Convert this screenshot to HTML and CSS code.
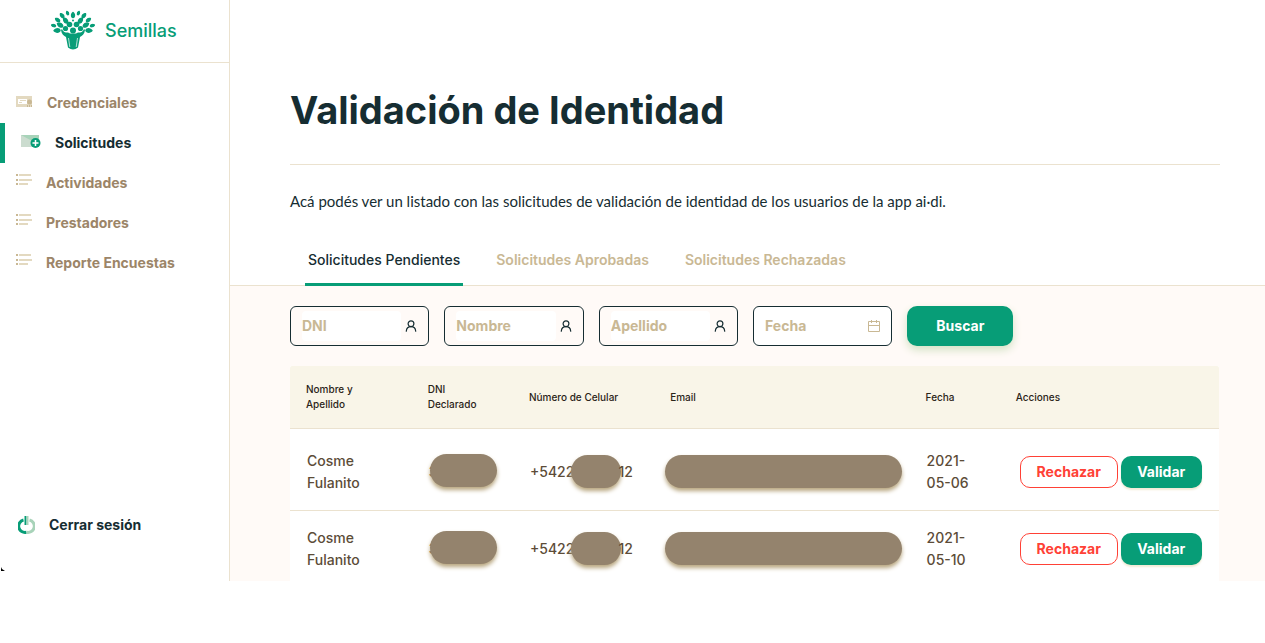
FILE: index.html
```html
<!DOCTYPE html>
<html lang="es">
<head>
<meta charset="utf-8">
<meta name="viewport" content="width=device-width, initial-scale=1">
<title>Semillas - Validación de Identidad</title>
<link rel="stylesheet" href="styles.css">
</head>
<body>
<svg class="sprite" aria-hidden="true">
  <symbol id="leaf" viewBox="-2 -3 4 6"><path d="M0-3C2.600-1 2.400 2 0 3C-2.400 2-2.600-1 0-3z"/></symbol>
  <symbol id="list" viewBox="0 0 16 12">
    <path fill="#c9b894" d="M0 0h2v2H0zM0 5h2v2H0zM0 9h2v2H0z"/>
    <path fill="#e3d9c0" d="M3 0h12v2H3zM3 5h13v2H3zM3 9h9v2H3z"/>
  </symbol>
  <symbol id="user" viewBox="0 0 12 12">
    <g fill="none" stroke="#162d32" stroke-width="1.200" stroke-linecap="round"><circle cx="6" cy="3.800" r="2.900"/><path d="M1.300 11.200c.200-3 2-4.500 4.700-4.500s4.500 1.500 4.700 4.500"/></g>
  </symbol>
</svg>
<div class="app">
  <aside class="sidebar">
    <a class="brand" href="#">
      <svg class="brand-logo" viewBox="0 0 44 40" aria-hidden="true" fill="#079d77">
        <use href="#leaf" x="-2" y="-3" width="4" height="6" transform="translate(22 5) scale(1.200)"/>
        <use href="#leaf" x="-2" y="-3" width="4" height="6" transform="translate(16.500 3) rotate(-20) scale(.9)"/>
        <use href="#leaf" x="-2" y="-3" width="4" height="6" transform="translate(27.500 3) rotate(20) scale(.9)"/>
        <use href="#leaf" x="-2" y="-3" width="4" height="6" transform="translate(11 5.500) rotate(-40) scale(1.100)"/>
        <use href="#leaf" x="-2" y="-3" width="4" height="6" transform="translate(33 5.500) rotate(40) scale(1.100)"/>
        <use href="#leaf" x="-2" y="-3" width="4" height="6" transform="translate(14.500 10.500) rotate(-35) scale(1.300)"/>
        <use href="#leaf" x="-2" y="-3" width="4" height="6" transform="translate(29.500 10.500) rotate(35) scale(1.300)"/>
        <use href="#leaf" x="-2" y="-3" width="4" height="6" transform="translate(6.500 10) rotate(-55) scale(1.100)"/>
        <use href="#leaf" x="-2" y="-3" width="4" height="6" transform="translate(37.500 10) rotate(55) scale(1.100)"/>
        <use href="#leaf" x="-2" y="-3" width="4" height="6" transform="translate(9 15) rotate(-60) scale(1.300)"/>
        <use href="#leaf" x="-2" y="-3" width="4" height="6" transform="translate(35 15) rotate(60) scale(1.300)"/>
        <use href="#leaf" x="-2" y="-3" width="4" height="6" transform="translate(2.500 15.500) rotate(-75)"/>
        <use href="#leaf" x="-2" y="-3" width="4" height="6" transform="translate(41.500 15.500) rotate(75)"/>
        <use href="#leaf" x="-2" y="-3" width="4" height="6" transform="translate(6 20.500) rotate(-95) scale(1.300)"/>
        <use href="#leaf" x="-2" y="-3" width="4" height="6" transform="translate(38 20.500) rotate(95) scale(1.300)"/>
        <circle cx="22" cy="10.500" r="1"/>
        <circle cx="18.500" cy="14.500" r="2.800"/><circle cx="25.500" cy="14.500" r="2.800"/><circle cx="14.500" cy="18.500" r="2.600"/><circle cx="29.500" cy="18.500" r="2.600"/><circle cx="22" cy="20.500" r="3"/>
        <path d="M11 19c1 3 3 3.500 6 3.500l2 1h6l2-1c3 0 5-.5 6-3.500l1 1c-.5 4-3 6-5 7L27 37.500q-5 4-10 0L15 27C13 26 10.500 24 10 20z"/>
        <path d="M17.500 28l1.300 9M26.500 28l-1.300 9" stroke="#fff" stroke-width=".7"/>
      </svg>
      <span>Semillas</span>
    </a>
    <nav class="menu">
      <a class="menu-item" href="#">
        <svg width="17" height="12" viewBox="0 0 17 12" aria-hidden="true"><path fill="#e3d9c0" d="M0 0h16v11H0z"/><path fill="#fff" d="M2 3h9v5H2z"/><path stroke="#e3d9c0" d="M4 4.500h6M3 6.500h3"/><circle cx="13.500" cy="6" r="2.500" fill="#c9b894"/><path fill="#c9b894" d="M11 9h1v2h-1zM13 9h1v2h-1zM15 9h1v2h-1z"/></svg>
        Credenciales</a>
      <a class="menu-item is-active" href="#" aria-current="page">
        <svg width="20" height="14" viewBox="0 0 20 14" aria-hidden="true"><path fill="#cbdccf" d="M0 0h18v12H0z"/><path fill="#a8d3b9" d="M0 0h18v4l-5 3z"/><circle cx="14.500" cy="8" r="5" fill="#079d77"/><path stroke="#fff" stroke-width="1.500" d="M14.500 5v6M11.500 8h6"/></svg>
        Solicitudes</a>
      <a class="menu-item" href="#"><svg class="icon-list" width="16" height="12" aria-hidden="true"><use href="#list"/></svg>Actividades</a>
      <a class="menu-item" href="#"><svg class="icon-list" width="16" height="12" aria-hidden="true"><use href="#list"/></svg>Prestadores</a>
      <a class="menu-item" href="#"><svg class="icon-list" width="16" height="12" aria-hidden="true"><use href="#list"/></svg>Reporte Encuestas</a>
    </nav>
    <button class="logout" type="button">
      <svg width="17" height="18" viewBox="0 0 17 18" aria-hidden="true" fill="none" stroke-width="3"><path stroke="#079d77" d="M5.500 4A6.300 6.300 0 0 0 8.500 16.300"/><path stroke="#a8d3b9" d="M11.500 4A6.300 6.300 0 0 1 8.500 16.300"/><path stroke="#079d77" stroke-width="2" d="M7.500 0v9"/><path stroke="#a8d3b9" stroke-width="2" d="M9.500 0v9"/></svg>
      Cerrar sesión</button>
    <svg class="corner" width="4" height="4" viewBox="0 0 4 4" aria-hidden="true"><path d="M0 0l1 2 3 2H0z"/></svg>
  </aside>
  <main class="main">
    <header class="head">
      <h1>Validación de Identidad</h1>
      <p>Acá podés ver un listado con las solicitudes de validación de identidad de los usuarios de la app ai·di.</p>
    </header>
    <div class="tabs" role="tablist">
      <button class="tab is-active" type="button" role="tab" aria-selected="true">Solicitudes Pendientes</button>
      <button class="tab" type="button" role="tab" aria-selected="false">Solicitudes Aprobadas</button>
      <button class="tab" type="button" role="tab" aria-selected="false">Solicitudes Rechazadas</button>
    </div>
    <section class="panel">
      <form class="filters">
        <label class="field"><input type="text" placeholder="DNI" aria-label="DNI"><svg width="12" height="12" aria-hidden="true"><use href="#user"/></svg></label>
        <label class="field"><input type="text" placeholder="Nombre" aria-label="Nombre"><svg width="12" height="12" aria-hidden="true"><use href="#user"/></svg></label>
        <label class="field"><input type="text" placeholder="Apellido" aria-label="Apellido"><svg width="12" height="12" aria-hidden="true"><use href="#user"/></svg></label>
        <label class="field field-date"><input type="text" placeholder="Fecha" aria-label="Fecha"><svg width="12" height="12" viewBox="0 0 12 12" aria-hidden="true" fill="none" stroke="#c9b894"><path d="M.5 1.500h11v10H.5zM.5 5.500h11M3.500 0v3M8.500 0v3"/></svg></label>
        <button class="search" type="button">Buscar</button>
      </form>
      <table class="requests">
        <colgroup><col class="c-name"><col class="c-dni"><col class="c-phone"><col class="c-mail"><col class="c-date"><col></colgroup>
        <thead>
          <tr><th>Nombre y<br>Apellido</th><th>DNI<br>Declarado</th><th>Número de Celular</th><th>Email</th><th>Fecha</th><th>Acciones</th></tr>
        </thead>
        <tbody>
          <tr>
            <td>Cosme<br>Fulanito</td>
            <td><span class="masked">3<span class="mask mask-dni"></span></span></td>
            <td><span class="phone">+5422<span class="mask mask-phone"></span>12</span></td>
            <td class="mail"><span class="mask mask-mail"></span></td>
            <td>2021-<br>05-06</td>
            <td class="actions"><div class="buttons"><button class="btn reject" type="button">Rechazar</button><button class="btn accept" type="button">Validar</button></div></td>
          </tr>
          <tr>
            <td>Cosme<br>Fulanito</td>
            <td><span class="masked">3<span class="mask mask-dni"></span></span></td>
            <td><span class="phone">+5422<span class="mask mask-phone"></span>12</span></td>
            <td class="mail"><span class="mask mask-mail"></span></td>
            <td>2021-<br>05-10</td>
            <td class="actions"><div class="buttons"><button class="btn reject" type="button">Rechazar</button><button class="btn accept" type="button">Validar</button></div></td>
          </tr>
        </tbody>
      </table>
    </section>
  </main>
</div>
</body>
</html>
```
FILE: styles.css
```css
:root {
  --green: #079d77;
  --ink: #162d32;
  --tan: #9c8568;
  --sand: #c9b894;
  --line: #ebe2cf;
}

* { box-sizing: border-box; }

body {
  margin: 0;
  background: #fff;
  color: var(--ink);
  font-family: Inter, "Open Sans", sans-serif;
  font-size: 14px;
}

button, input { font: inherit; }
button { cursor: pointer; }
a { color: inherit; text-decoration: none; }
.sprite { position: absolute; width: 0; height: 0; }

.app { display: flex; }

.sidebar {
  position: relative;
  display: flex;
  flex: 0 0 230px;
  flex-direction: column;
  border-right: 1px solid var(--line);
}

.brand {
  display: flex;
  align-items: center;
  gap: 10px;
  height: 63px;
  padding: 0 0 2px 51px;
  border-bottom: 1px solid var(--line);
  color: var(--green);
  font-size: 18px;
  font-weight: 500;
}
.brand-logo { width: 44px; height: 40px; }

.menu { padding-top: 20px; }
.menu-item {
  display: flex;
  align-items: center;
  gap: 14px;
  height: 40px;
  padding: 0 0 2px 16px;
  color: var(--tan);
  font-weight: 700;
}
.menu-item .icon-list { margin-bottom: 4px; }
.menu-item.is-active {
  border-left: 5px solid var(--green);
  color: var(--ink);
}

.logout {
  display: flex;
  align-items: center;
  gap: 14px;
  margin: auto 0 44px;
  padding: 0 0 0 18px;
  border: 0;
  background: none;
  color: var(--ink);
  font-weight: 700;
  line-height: 24px;
}
.corner { position: absolute; left: 1px; bottom: 10px; }

.main { flex: 1; min-width: 0; }

.head { padding: 80px 45px 0 60px; }
.head h1 {
  margin: 0;
  padding-bottom: 24px;
  border-bottom: 1px solid var(--line);
  font-size: 38px;
  font-weight: 700;
  line-height: 60px;
}
.head p {
  margin: 24px 0 0;
  font-family: Lato, "Open Sans", sans-serif;
  font-size: 15px;
  line-height: 24px;
}

.tabs {
  display: flex;
  gap: 30px;
  margin-top: 22px;
  padding-left: 75px;
  border-bottom: 1px solid var(--line);
}
.tab {
  height: 51px;
  margin-bottom: -1px;
  padding: 0 3px;
  border: 0;
  border-bottom: 3px solid transparent;
  background: none;
  color: var(--sand);
  font-weight: 600;
}
.tab.is-active {
  border-bottom-color: var(--green);
  color: var(--ink);
  font-weight: 500;
}

.panel { padding: 20px 46px 0 60px; background: #fffaf7; }

.filters { display: flex; gap: 15px; margin-bottom: 20px; }
.field {
  display: flex;
  align-items: center;
  gap: 4px;
  width: 15%;
  height: 40px;
  padding: 0 11px;
  border: 1px solid var(--ink);
  border-radius: 6px;
}
.field-date { background: #fff; }
.field svg { flex: none; }
.field input {
  flex: 1;
  min-width: 0;
  height: 30px;
  padding: 0 0 2px;
  border: 0;
  border-radius: 4px;
  outline: 0;
  background: #fff;
  color: var(--ink);
  font-weight: 700;
}
.field input::placeholder { color: var(--sand); opacity: 1; }
.search {
  width: 106px;
  height: 40px;
  padding: 0 0 2px;
  border: 0;
  border-radius: 10px;
  background: var(--green);
  box-shadow: 0 4px 8px #d3e2c4;
  color: #fff;
  font-weight: 700;
}

.requests {
  width: 100%;
  border-spacing: 0;
  table-layout: fixed;
  background: #fff;
  color: #5c4c38;
  font-weight: 500;
}
.c-name { width: 13.1%; }
.c-dni { width: 10.9%; }
.c-phone { width: 15.2%; }
.c-mail { width: 27.5%; }
.c-date { width: 9.7%; }

.requests th {
  height: 63px;
  padding: 0 0 0 16px;
  border-bottom: 1px solid var(--line);
  background: #f9f5e8;
  color: #2b2418;
  font-size: 10px;
  font-weight: 500;
  line-height: 15px;
  text-align: left;
}
.requests th:first-child { border-top-left-radius: 2px; }
.requests th:last-child { border-top-right-radius: 2px; }
.requests td {
  padding: 16px 0 10px 17px;
  line-height: 22px;
  white-space: nowrap;
}
.requests tbody tr:first-child td {
  padding-top: 21px;
  padding-bottom: 16px;
  border-bottom: 1px solid var(--line);
}
.requests .mail { padding-left: 11px; }
.requests .actions { padding-left: 20px; }

.masked { position: relative; }
.mask {
  display: block;
  flex: none;
  height: 33px;
  margin-bottom: 2px;
  border-radius: 17px;
  background: #94836d;
  box-shadow: 0 3px 4px #b8a67f;
}
.mask-dni { position: absolute; top: -9px; left: 1px; width: 67px; }
.mask-phone { width: 50px; margin-left: -3px; margin-right: -3px; }
.mask-mail { width: 237px; }
.phone { display: flex; align-items: center; }

.buttons { display: flex; gap: 3px; }
.btn {
  height: 32px;
  padding: 0;
  border: 0;
  border-radius: 10px;
  font-weight: 700;
}
.reject {
  width: 98px;
  border: 1px solid #ff4136;
  background: #fff;
  color: #ff4136;
}
.accept {
  width: 81px;
  background: var(--green);
  box-shadow: 0 2px 2px #f2ead6;
  color: #fff;
}
```
